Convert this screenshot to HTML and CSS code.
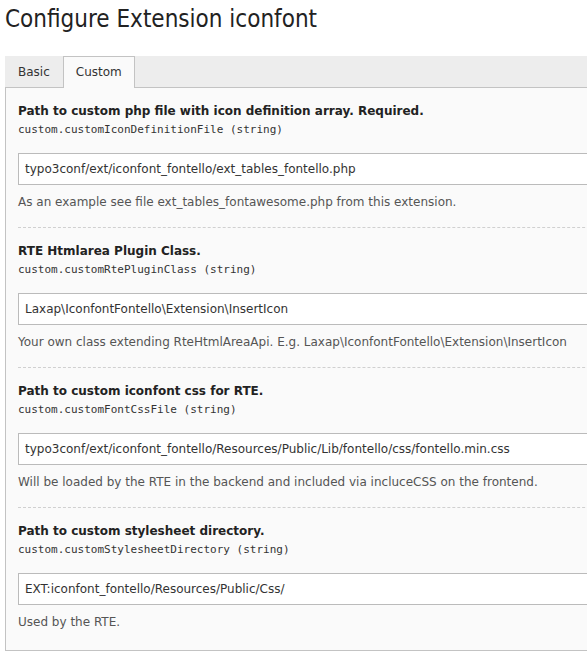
FILE: index.html
```html
<!DOCTYPE html>
<html>
<head>
<meta charset="utf-8">
<link rel="stylesheet" href="styles.css">
</head>
<body>
<div class="page">
  <h1 class="title">Configure Extension iconfont</h1>
  <div class="tabs">
    <div class="tab">Basic</div>
    <div class="tab active">Custom</div>
  </div>
  <div class="panel">
    <div class="field">
      <div class="label">Path to custom php file with icon definition array. Required.</div>
      <div class="key">custom.customIconDefinitionFile (string)</div>
      <input class="input" type="text" value="typo3conf/ext/iconfont_fontello/ext_tables_fontello.php">
      <div class="desc">As an example see file ext_tables_fontawesome.php from this extension.</div>
    </div>
    <div class="field">
      <div class="label">RTE Htmlarea Plugin Class.</div>
      <div class="key">custom.customRtePluginClass (string)</div>
      <input class="input" type="text" value="Laxap\IconfontFontello\Extension\InsertIcon">
      <div class="desc">Your own class extending RteHtmlAreaApi. E.g. Laxap\IconfontFontello\Extension\InsertIcon</div>
    </div>
    <div class="field">
      <div class="label">Path to custom iconfont css for RTE.</div>
      <div class="key">custom.customFontCssFile (string)</div>
      <input class="input" type="text" value="typo3conf/ext/iconfont_fontello/Resources/Public/Lib/fontello/css/fontello.min.css">
      <div class="desc">Will be loaded by the RTE in the backend and included via incluceCSS on the frontend.</div>
    </div>
    <div class="field">
      <div class="label">Path to custom stylesheet directory.</div>
      <div class="key">custom.customStylesheetDirectory (string)</div>
      <input class="input" type="text" value="EXT:iconfont_fontello/Resources/Public/Css/">
      <div class="desc">Used by the RTE.</div>
    </div>
  </div>
</div>
</body>
</html>
```
FILE: styles.css
```css
html, body {
  margin: 0;
  padding: 0;
  background: #ffffff;
  overflow: hidden;
}
.page {
  width: 660px;
  padding-left: 5px;
  font-family: "DejaVu Sans", Verdana, sans-serif;
  font-size: 12px;
  color: #333333;
}
.title {
  margin: 0 0 18px 0;
  height: 38px;
  line-height: 38px;
  font-family: "DejaVu Sans Condensed", sans-serif;
  font-weight: normal;
  font-size: 24px;
  color: #222222;
}
.tabs {
  display: flex;
  height: 31px;
  background: #ededed;
  border-bottom: 1px solid #c3c3c3;
}
.tab {
  height: 31px;
  line-height: 31px;
  padding: 0 12px 0 12px;
  border: 1px solid transparent;
  border-bottom: none;
  box-sizing: border-box;
  color: #333333;
}
.tab.active {
  background: #fafafa;
  border-color: #c3c3c3;
  height: 32px;
  margin-bottom: -1px;
}
.panel {
  background: #fafafa;
  border-left: 1px solid #c3c3c3;
  border-bottom: 1px solid #c3c3c3;
  padding: 0 0 3px 12px;
}
.field {
  padding: 14px 0 16px 0;
  border-bottom: 1px dashed #d0d0d0;
  display: flex;
  flex-direction: column;
}
.field:last-child {
  border-bottom: none;
}
.label {
  font-weight: bold;
  line-height: 19px;
  color: #222222;
}
.key {
  font-family: "DejaVu Sans Mono", monospace;
  font-size: 11px;
  line-height: 18px;
  color: #333333;
}
.input {
  margin: 14px 0 0 0;
  height: 32px;
  box-sizing: border-box;
  border: 1px solid #bbbbbb;
  background: #ffffff;
  padding: 0 6px;
  font-family: "DejaVu Sans", Verdana, sans-serif;
  font-size: 12px;
  color: #333333;
  outline: none;
}
.desc {
  margin-top: 8px;
  line-height: 18px;
  color: #555555;
}
```
